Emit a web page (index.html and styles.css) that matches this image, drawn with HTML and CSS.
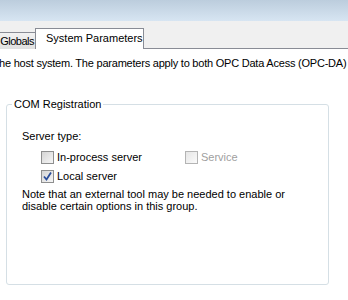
FILE: index.html
```html
<!DOCTYPE html>
<html lang="en">
<head>
    <meta charset="UTF-8">
    <title>System Parameters</title>
    <link rel="stylesheet" href="styles.css">
</head>
<body>
    <div class="caption"></div>

    <div class="tabstrip">
        <div class="tab">Globals</div>
        <div class="tab active">System Parameters</div>
    </div>

    <div class="page">
        <p class="intro">he host system. The parameters apply to both OPC Data Acess (OPC-DA)</p>

        <fieldset class="group">
            <legend>COM Registration</legend>
            <div class="label">Server type:</div>

            <div class="options">
                <label class="check">
                    <span class="box"></span>
                    In-process server
                </label>
                <label class="check disabled">
                    <span class="box"></span>
                    Service
                </label>
                <label class="check">
                    <span class="box checked">
                        <svg width="11" height="11" viewBox="0 0 11 11">
                            <path d="M2 5.5 L4.5 8.5 L9 1.5" fill="none" stroke="#2a4d9a" stroke-width="1.8"/>
                        </svg>
                    </span>
                    Local server
                </label>
            </div>

            <p class="note">Note that an external tool may be needed to enable or disable certain options in this group.</p>
        </fieldset>
    </div>
</body>
</html>
```

FILE: styles.css
```css
* {
    box-sizing: border-box;
    margin: 0;
    padding: 0;
}

body {
    width: 348px;
    height: 300px;
    overflow: hidden;
    background: white;
    font-family: "Liberation Sans", Arial, sans-serif;
    font-size: 11px;
    color: #000;
}

.caption {
    height: 21px;
    background: linear-gradient(#bccddd, #d7e5f2);
}

.tabstrip {
    height: 28px;
    background: #f0f0f0;
    border-bottom: 1px solid #898c95;
    display: flex;
    align-items: flex-end;
}

.tab {
    width: 42px;
    height: 17px;
    margin-bottom: -1px;
    margin-left: -6px;
    padding: 2px 1px 0 0;
    text-align: right;
    letter-spacing: -0.5px;
    background: linear-gradient(#f2f2f2, #e0e0e0);
    border: 1px solid #898c95;
    border-bottom: none;
    white-space: nowrap;
}

.tab.active {
    width: 109px;
    height: 21px;
    margin-left: -1px;
    padding: 3px 0 0 10px;
    text-align: left;
    letter-spacing: 0;
    background: white;
}

.page {
    padding-top: 8px;
}

.intro {
    white-space: nowrap;
    margin-left: -1px;
    letter-spacing: -0.22px;
    line-height: 13px;
}

.group {
    margin: 28px 0 0 6px;
    width: 323px;
    height: 187px;
    border: 1px solid #d5dfe5;
    border-radius: 3px;
    padding: 0 0 0 5px;
}

.group legend {
    padding: 0 2px;
    line-height: 13px;
}

.label {
    margin: 19px 0 0 10px;
    line-height: 13px;
}

.options {
    display: grid;
    grid-template-columns: 144px auto;
    row-gap: 6px;
    margin: 8px 0 0 29px;
}

.check {
    display: flex;
    align-items: center;
    gap: 3px;
    line-height: 13px;
}

.box {
    width: 13px;
    height: 13px;
    border: 1px solid #8e8f8f;
    background: linear-gradient(135deg, #d4d4d4, #f6f6f6);
    display: flex;
    align-items: center;
    justify-content: center;
}

.check.disabled {
    color: #a0a0a0;
}

.check.disabled .box {
    border-color: #b4b4b4;
    background: linear-gradient(135deg, #e6e6e6, #fafafa);
}

.note {
    margin: 5px 0 0 10px;
    line-height: 12px;
    width: 275px;
}
```
